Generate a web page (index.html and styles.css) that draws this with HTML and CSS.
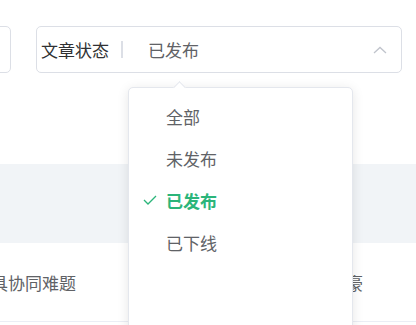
FILE: index.html
```html
<!DOCTYPE html>
<html lang="zh-CN">
<head>
    <meta charset="UTF-8">
    <meta name="viewport" content="width=device-width, initial-scale=1.0">
    <title>文章列表</title>
    <link rel="stylesheet" href="styles.css">
</head>
<body>
    <div class="filtros">
        <div class="campo campo-cortado"></div>
        <div class="select">
            <span class="select-label">文章状态</span>
            <span class="select-sep"></span>
            <span class="select-valor">已发布</span>
            <svg class="select-seta" width="14" height="8" viewBox="0 0 14 8">
                <polyline points="1,7 7,1.5 13,7" fill="none" stroke="#c0c4cc" stroke-width="1.3"/>
            </svg>
        </div>
    </div>

    <div class="tabela">
        <div class="tabela-cabecalho"></div>
        <div class="tabela-linha">
            <span class="celula celula-titulo">工具协同难题</span>
            <span class="celula celula-autor">自豪</span>
        </div>
    </div>

    <div class="dropdown">
        <div class="dropdown-seta"></div>
        <ul class="dropdown-lista">
            <li class="opcao"><span class="opcao-check"></span>全部</li>
            <li class="opcao"><span class="opcao-check"></span>未发布</li>
            <li class="opcao selecionada">
                <span class="opcao-check">
                    <svg width="14" height="10" viewBox="0 0 14 10">
                        <polyline points="1,5 5,9 13,1" fill="none" stroke="#2bb57a" stroke-width="1.3"/>
                    </svg>
                </span>已发布
            </li>
            <li class="opcao"><span class="opcao-check"></span>已下线</li>
        </ul>
    </div>
</body>
</html>
```

FILE: styles.css
```css
body {
    margin: 0;
    padding: 0;
    background: #fff;
    font-family: "Noto Sans CJK SC", "Noto Sans", sans-serif;
    font-size: 17px;
    color: #606266;
    overflow: hidden;
    height: 325px;
    position: relative;
}

.filtros {
    display: flex;
    padding-top: 26px;
}

.campo {
    height: 45px;
    border: 1px solid #dcdfe6;
    border-radius: 5px;
}

.campo-cortado {
    width: 60px;
    margin-left: -51px;
}

.select {
    display: flex;
    align-items: center;
    width: 360px;
    height: 45px;
    margin-left: 25px;
    padding-left: 4px;
    border: 1px solid #dcdfe6;
    border-radius: 5px;
    box-sizing: content-box;
}

.select-label {
    color: #303133;
    line-height: 1;
}

.select-sep {
    width: 2px;
    height: 17px;
    margin-left: 12px;
    background: #dcdfe6;
}

.select-valor {
    margin-left: 25px;
    line-height: 1;
    color: #606266;
}

.select-seta {
    margin-left: auto;
    margin-right: 14px;
}

.tabela {
    margin-top: 91px;
}

.tabela-cabecalho {
    height: 79px;
    background: #f1f4f7;
}

.tabela-linha {
    display: flex;
    align-items: center;
    height: 78px;
    border-bottom: 1px solid #ebeef5;
}

.celula-titulo {
    margin-left: -26px;
}

.celula-autor {
    margin-left: 253px;
}

/* dropdown do select aberto */
.dropdown {
    position: absolute;
    left: 128px;
    top: 87px;
    width: 223px;
    height: 260px;
    background: #fff;
    border: 1px solid #e4e7ed;
    border-radius: 5px;
    box-shadow: 0 2px 12px rgba(0, 0, 0, 0.1);
}

.dropdown-seta {
    position: absolute;
    left: 46px;
    top: -5px;
    width: 8px;
    height: 8px;
    background: #fff;
    border-top: 1px solid #e4e7ed;
    border-left: 1px solid #e4e7ed;
    transform: rotate(45deg);
}

.dropdown-lista {
    list-style: none;
    margin: 0;
    padding: 7px 0 0;
}

.opcao {
    display: flex;
    align-items: center;
    height: 42px;
    padding-left: 14px;
    color: #606266;
}

.opcao-check {
    display: flex;
    align-items: center;
    width: 23px;
}

.selecionada {
    color: #2bb57a;
    font-weight: bold;
}
```
